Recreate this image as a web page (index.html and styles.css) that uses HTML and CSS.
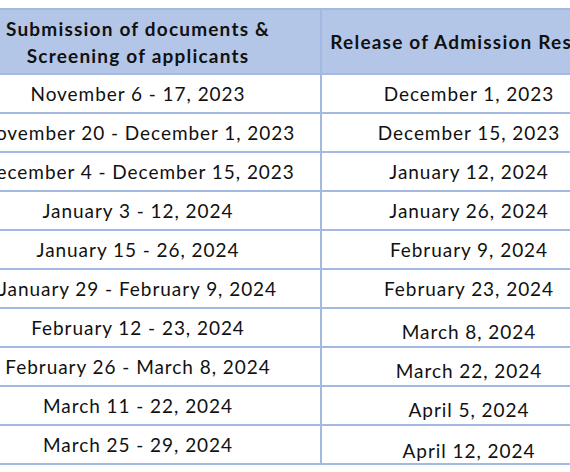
FILE: index.html
```html
<!DOCTYPE html>
<html>
<head>
<meta charset="utf-8">
<link rel="stylesheet" href="styles.css">
</head>
<body>
<div class="frame">
<table class="sched">
<thead>
<tr><th class="c1">Submission of documents &amp;<br>Screening of applicants</th><th class="c2">Release of Admission Results</th></tr>
</thead>
<tbody>
<tr><td>November 6 - 17, 2023</td><td>December 1, 2023</td></tr>
<tr><td>November 20 - December 1, 2023</td><td>December 15, 2023</td></tr>
<tr><td>December 4 - December 15, 2023</td><td>January 12, 2024</td></tr>
<tr><td>January 3 - 12, 2024</td><td>January 26, 2024</td></tr>
<tr><td>January 15 - 26, 2024</td><td>February 9, 2024</td></tr>
<tr><td>January 29 - February 9, 2024</td><td>February 23, 2024</td></tr>
<tr><td>February 12 - 23, 2024</td><td class="lo">March 8, 2024</td></tr>
<tr><td>February 26 - March 8, 2024</td><td class="lo">March 22, 2024</td></tr>
<tr><td>March 11 - 22, 2024</td><td class="lo">April 5, 2024</td></tr>
<tr><td>March 25 - 29, 2024</td><td class="lower">April 12, 2024</td></tr>
</tbody>
</table>
</div>
</body>
</html>
```
FILE: styles.css
```css
html, body {
  margin: 0;
  padding: 0;
  background: #ffffff;
  overflow: hidden;
}
.frame {
  width: 570px;
  height: 472px;
  overflow: hidden;
  padding-top: 8px;
  box-sizing: border-box;
}
.sched {
  border-collapse: collapse;
  table-layout: fixed;
  margin-left: -46px;
  width: 662px;
  font-family: "Lato", "Liberation Sans", sans-serif;
  font-size: 19px;
  letter-spacing: 0.95px;
  color: #111111;
}
.sched th, .sched td {
  border: 2px solid #a3b9e2;
  text-align: center;
  padding: 0;
  white-space: nowrap;
}
.sched th {
  background: #b4c6e7;
  font-weight: bold;
  letter-spacing: 1.2px;
  height: 63px;
  line-height: 27px;
}
.sched td {
  height: 37px;
  line-height: 22px;
}
.sched td.lo {
  padding-top: 8px;
  height: 29px;
}
.sched td.lower {
  padding-top: 12px;
  height: 25px;
}
.c1 { width: 364px; }
.c2 { width: 294px; }
```
